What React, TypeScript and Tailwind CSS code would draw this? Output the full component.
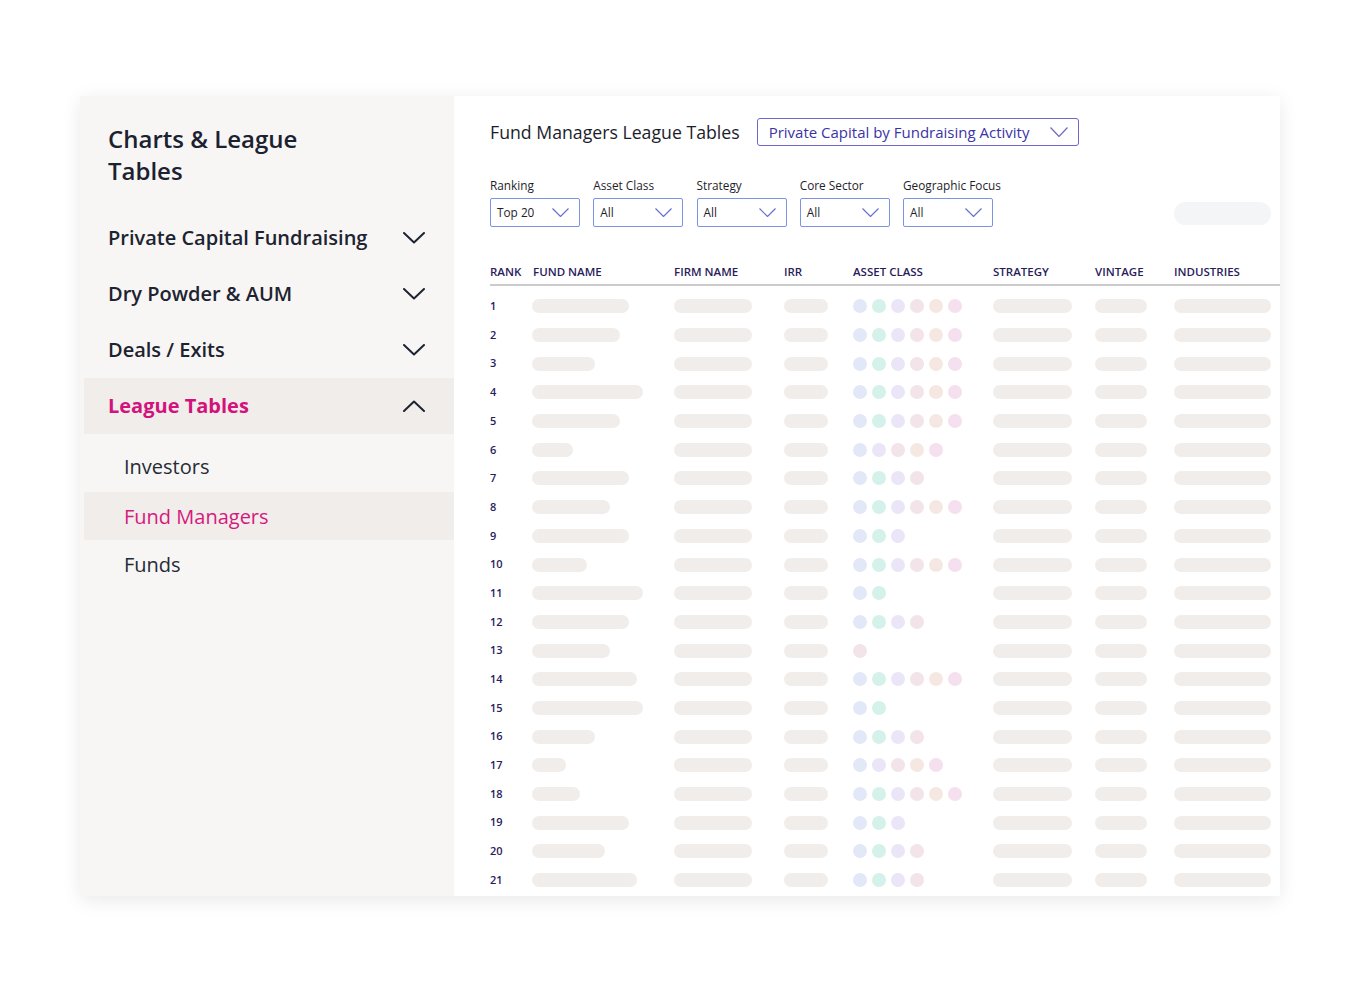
import React from "react";

const DOT: Record<string, string> = {
  b: "bg-[#e3e8f8]",
  t: "bg-[#d5f2ea]",
  l: "bg-[#ebe6f7]",
  g: "bg-[#f2e4e8]",
  p: "bg-[#f5e8e3]",
  k: "bg-[#f4e0ee]",
};

const ALL = ["b", "t", "l", "g", "p", "k"];

const rows: { w: number; dots: string[] }[] = [
  { w: 97, dots: ALL },
  { w: 88, dots: ALL },
  { w: 63, dots: ALL },
  { w: 111, dots: ALL },
  { w: 88, dots: ALL },
  { w: 41, dots: ["b", "l", "g", "p", "k"] },
  { w: 97, dots: ["b", "t", "l", "g"] },
  { w: 78, dots: ALL },
  { w: 97, dots: ["b", "t", "l"] },
  { w: 55, dots: ALL },
  { w: 111, dots: ["b", "t"] },
  { w: 97, dots: ["b", "t", "l", "g"] },
  { w: 78, dots: ["g"] },
  { w: 105, dots: ALL },
  { w: 111, dots: ["b", "t"] },
  { w: 63, dots: ["b", "t", "l", "g"] },
  { w: 34, dots: ["b", "l", "g", "p", "k"] },
  { w: 48, dots: ALL },
  { w: 97, dots: ["b", "t", "l"] },
  { w: 73, dots: ["b", "t", "l", "g"] },
  { w: 105, dots: ["b", "t", "l", "g"] },
];

function Chevron({ up = false }: { up?: boolean }) {
  return (
    <svg width="22" height="12" viewBox="0 0 22 12" fill="none">
      <path
        d={up ? "M1 11 L11 1.5 L21 11" : "M1 1 L11 10.5 L21 1"}
        stroke="#1d2330"
        strokeWidth="2"
        strokeLinecap="round"
        strokeLinejoin="round"
      />
    </svg>
  );
}

function ThinChevron({ color, w = 17, h = 9 }: { color: string; w?: number; h?: number }) {
  return (
    <svg width={w} height={h} viewBox={`0 0 ${w} ${h}`} fill="none">
      <path d={`M0.5 0.5 L${w / 2} ${h - 0.5} L${w - 0.5} 0.5`} stroke={color} strokeWidth="1.2" />
    </svg>
  );
}

function Bar({ w }: { w: number }) {
  return <div className="h-[14px] rounded-full bg-[#f1edea]" style={{ width: w }} />;
}

function Filter({ label, value }: { label: string; value: string }) {
  return (
    <div className="flex flex-col">
      <div className="text-[11.8px] leading-[14px] text-[#1e1e2a] mb-[6px]">{label}</div>
      <div className="w-[90px] h-[29px] border border-[#7c92e2] rounded-[2px] flex items-center justify-between pl-[6px] pr-[10px]">
        <span className="text-[11.8px] text-[#1e1e2a]">{value}</span>
        <ThinChevron color="#6670d0" />
      </div>
    </div>
  );
}

const cols = "grid grid-cols-[43px_141px_110px_69px_140px_102px_79px_1fr]";

export default function App() {
  return (
    <div className="w-[1360px] h-[992px] bg-white pt-[96px] pl-[80px]" style={{ fontFamily: '"Open Sans", "Noto Sans", sans-serif' }}>
      <div className="w-[1200px] h-[800px] flex shadow-[0_4px_18px_rgba(0,0,0,0.09)] overflow-hidden">
        {/* Sidebar */}
        <div className="w-[374px] bg-[#f7f6f4] flex flex-col">
          <div className="pl-[28px] pt-[27px] pb-[1px] text-[24px] leading-[32px] font-semibold text-[#1b2130] h-[114px]">
            Charts &amp; League
            <br />
            Tables
          </div>
          {["Private Capital Fundraising", "Dry Powder & AUM", "Deals / Exits"].map((t) => (
            <div key={t} className="h-[56px] flex items-center justify-between pl-[28px] pr-[29px]">
              <span className="text-[20px] font-semibold text-[#1d2330]">{t}</span>
              <Chevron />
            </div>
          ))}
          <div className="h-[56px] ml-[4px] bg-[#f0edea] flex items-center justify-between pl-[24px] pr-[29px]">
            <span className="text-[20px] font-bold text-[#d3127c]">League Tables</span>
            <Chevron up />
          </div>
          <div className="pt-[8px] flex flex-col">
            <div className="h-[50px] flex items-center pl-[44px] text-[20px] text-[#262b36]">Investors</div>
            <div className="h-[48px] ml-[4px] bg-[#f0edea] flex items-center pl-[40px] pt-[2px] text-[20px] text-[#d6197f]">Fund Managers</div>
            <div className="h-[49px] flex items-center pl-[44px] text-[20px] text-[#262b36]">Funds</div>
          </div>
        </div>

        {/* Main */}
        <div className="flex-1 bg-white pl-[36px] pt-[22px] flex flex-col">
          <div className="flex items-center h-[28px]">
            <div className="text-[17.7px] font-medium text-[#1b1d2b]">Fund Managers League Tables</div>
            <div className="ml-[17px] w-[322px] h-[28px] border border-[#6e68cc] rounded-[3px] flex items-center justify-between pl-[11px] pr-[10px]">
              <span className="text-[15px] text-[#3a34a6]">Private Capital by Fundraising Activity</span>
              <ThinChevron color="#6e68cc" w={18} h={10} />
            </div>
          </div>
          <div className="flex items-end mt-[32px] pr-[9px]">
            <div className="flex gap-[13.25px]">
              <Filter label="Ranking" value="Top 20" />
              <Filter label="Asset Class" value="All" />
              <Filter label="Strategy" value="All" />
              <Filter label="Core Sector" value="All" />
              <Filter label="Geographic Focus" value="All" />
            </div>
            <div className="ml-auto w-[97px] h-[23px] rounded-full bg-[#f4f5f7] mb-[2px]" />
          </div>

          <div className={`${cols} mt-[36px] h-[23px] items-start border-b-2 border-[#cbcbcb] text-[11.5px] font-semibold text-[#2a1c5c] uppercase`}>
            <div>Rank</div>
            <div>Fund Name</div>
            <div>Firm Name</div>
            <div>IRR</div>
            <div>Asset Class</div>
            <div>Strategy</div>
            <div>Vintage</div>
            <div>Industries</div>
          </div>
          <div className="pt-[6px] flex flex-col">
            {rows.map((r, i) => (
              <div key={i} className={`${cols} h-[28.7px] items-center`}>
                <div className="text-[11px] font-semibold text-[#2a1c5c]">{i + 1}</div>
                <div className="-ml-px">
                  <Bar w={r.w} />
                </div>
                <Bar w={78} />
                <Bar w={44} />
                <div className="flex gap-[5px]">
                  {r.dots.map((d, j) => (
                    <div key={j} className={`w-[14px] h-[14px] rounded-full ${DOT[d]}`} />
                  ))}
                </div>
                <Bar w={79} />
                <Bar w={52} />
                <Bar w={97} />
              </div>
            ))}
          </div>
        </div>
      </div>
    </div>
  );
}
